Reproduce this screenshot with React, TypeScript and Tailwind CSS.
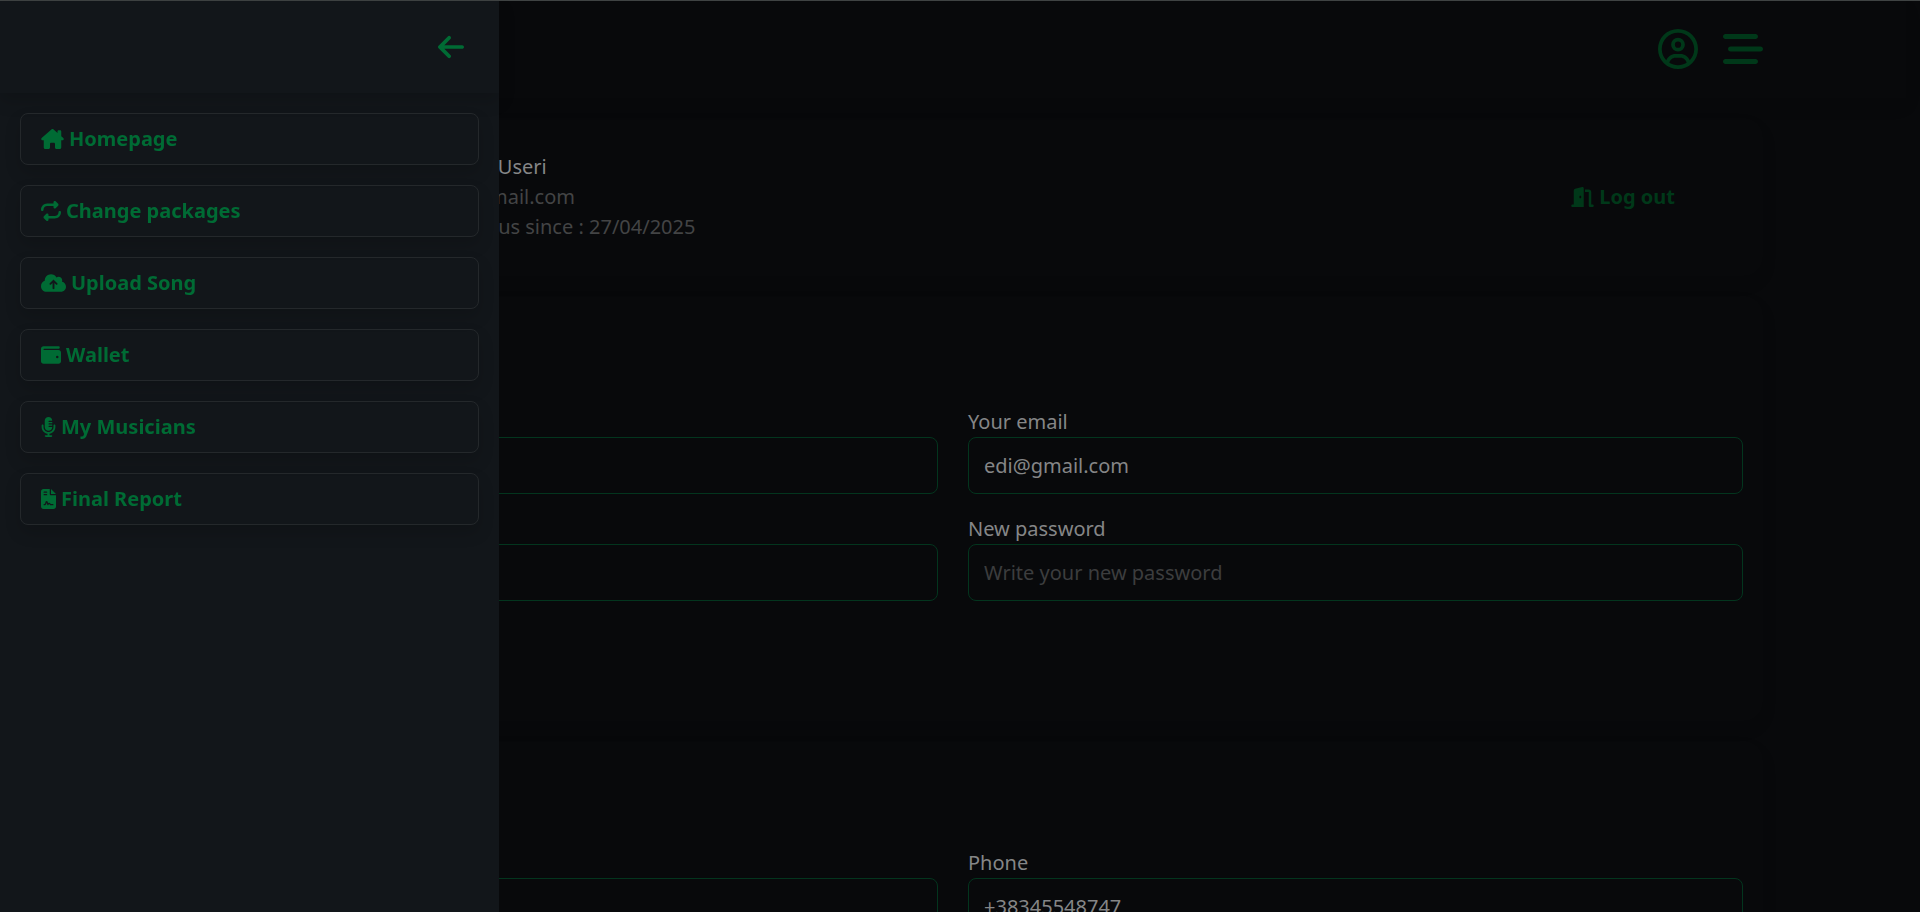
import type { InputHTMLAttributes } from "react";
import {
  FaArrowLeft,
  FaBarsStaggered,
  FaCloudArrowUp,
  FaDoorOpen,
  FaFileContract,
  FaHouseChimney,
  FaMicrophoneLines,
  FaRegCircleUser,
  FaRepeat,
  FaWallet,
} from "react-icons/fa6";

const menuItems = [
  { label: "Homepage", icon: FaHouseChimney, width: "w-[23px]" },
  { label: "Change packages", icon: FaRepeat, width: "w-5" },
  { label: "Upload Song", icon: FaCloudArrowUp, width: "w-[25px]" },
  { label: "Wallet", icon: FaWallet, width: "w-5" },
  { label: "My Musicians", icon: FaMicrophoneLines, width: "w-[15px]" },
  { label: "Final Report", icon: FaFileContract, width: "w-[15px]" },
];

type FieldProps = InputHTMLAttributes<HTMLInputElement> & {
  id: string;
  label: string;
};

const Field = ({ id, label, ...rest }: FieldProps) => (
  <div>
    <label htmlFor={id} className="block text-[#858687]">
      {label}
    </label>
    <input
      id={id}
      className="block h-[57px] w-full rounded-lg border border-[#03351e] bg-transparent px-[15px] text-[#858687] placeholder:text-[#3c3d3e]"
      {...rest}
    />
  </div>
);

const Header = () => (
  <header className="flex h-[97px] items-center justify-end gap-[25px] pr-[7.5%] pb-0.5 text-[40px] text-[#003819] shadow-[0_8px_16px_rgba(0,0,0,0.08)]">
    <button type="button" aria-label="Account">
      <FaRegCircleUser />
    </button>
    <button type="button" aria-label="Menu">
      <FaBarsStaggered />
    </button>
  </header>
);

const Sidebar = () => (
  <aside className="fixed inset-y-0 left-0 z-10 w-[499px] max-w-full border-t border-[#3f4343] bg-[#12161a]">
    <div className="flex h-[92px] items-center justify-end pr-[35px] shadow-[0_8px_16px_rgba(0,0,0,0.15)]">
      <button type="button" aria-label="Close menu" className="text-[#006b34]">
        <FaArrowLeft className="h-[30px] w-[26px]" />
      </button>
    </div>
    <nav className="flex flex-col gap-5 p-5">
      {menuItems.map(({ label, icon: Icon, width }) => (
        <a
          key={label}
          href="#"
          className="flex h-[52px] items-center gap-[5px] rounded-lg border border-[#24282b] px-5 font-bold text-[#006b34] shadow-[0_8px_16px_rgba(0,0,0,0.15)]"
        >
          <Icon className={`h-5 ${width}`} />
          {label}
        </a>
      ))}
    </nav>
  </aside>
);

export default function App() {
  return (
    <div className="h-screen overflow-hidden border-t border-[#3f4343] bg-[#08090b] pr-3.5 font-['Noto_Sans',sans-serif] text-[20px] leading-[30px]">
      <Header />
      <main className="mx-auto flex w-[85%] flex-col gap-5 pt-5">
        <section className="flex h-[158px] items-center justify-between rounded-[20px] pr-[88px] pl-[287px] shadow-[0_8px_16px_rgba(0,0,0,0.08)]">
          <div className="text-[#434445]">
            <p className="text-[#858687]">Edison Useri</p>
            <p>edi@gmail.com</p>
            <p>Part of us since : 27/04/2025</p>
          </div>
          <button type="button" className="flex items-center gap-[5px] font-bold text-[#003819]">
            <FaDoorOpen className="h-5 w-[23px]" />
            Log out
          </button>
        </section>
        <form className="grid grid-cols-2 gap-x-[30px] gap-y-5 rounded-[20px] px-5 pt-[111px] pb-[120px] shadow-[0_8px_16px_rgba(0,0,0,0.08)]">
          <Field id="name" label="Your name" defaultValue="Edison Useri" />
          <Field id="email" label="Your email" type="email" defaultValue="edi@gmail.com" />
          <Field id="old-password" label="Old password" type="password" />
          <Field id="new-password" label="New password" type="password" placeholder="Write your new password" />
        </form>
        <form className="grid grid-cols-2 gap-x-[30px] gap-y-5 rounded-[20px] px-5 pt-[107px] shadow-[0_8px_16px_rgba(0,0,0,0.08)]">
          <Field id="address" label="Address" />
          <Field id="phone" label="Phone" type="tel" defaultValue="+38345548747" />
        </form>
      </main>
      <Sidebar />
    </div>
  );
}
